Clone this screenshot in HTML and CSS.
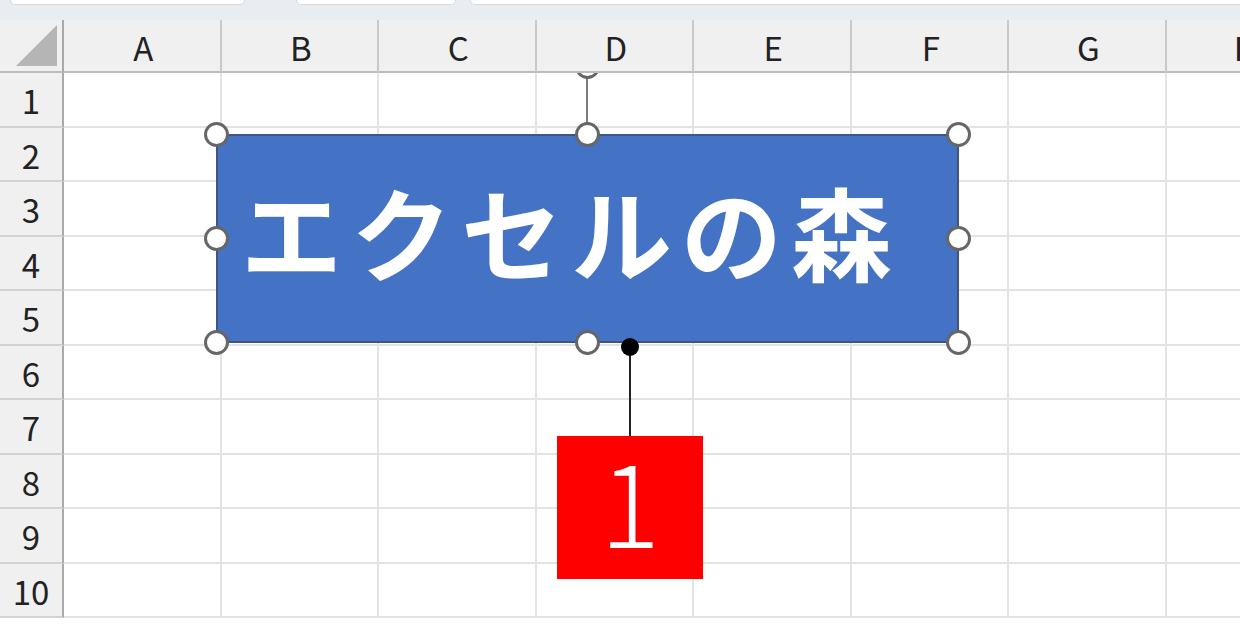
FILE: index.html
```html
<!DOCTYPE html>
<html lang="ja">
<head>
    <meta charset="UTF-8">
    <meta name="viewport" content="width=device-width, initial-scale=1.0">
    <title>エクセルの森</title>
    <link rel="stylesheet" href="styles.css">
</head>
<body>

<div class="page">
    <div class="topbar">
        <div class="tab tab-1"></div>
        <div class="tab tab-2"></div>
        <div class="tab tab-3"></div>
    </div>

    <div class="sheet">
        <div class="corner"><span class="select-all"></span></div>
        <div class="col-head">A</div><div class="col-head">B</div><div class="col-head">C</div><div class="col-head">D</div>
        <div class="col-head">E</div><div class="col-head">F</div><div class="col-head">G</div><div class="col-head">H</div>

        <div class="row-head">1</div><div class="cell"></div><div class="cell"></div><div class="cell"></div><div class="cell"></div><div class="cell"></div><div class="cell"></div><div class="cell"></div><div class="cell"></div>
        <div class="row-head">2</div><div class="cell"></div><div class="cell"></div><div class="cell"></div><div class="cell"></div><div class="cell"></div><div class="cell"></div><div class="cell"></div><div class="cell"></div>
        <div class="row-head">3</div><div class="cell"></div><div class="cell"></div><div class="cell"></div><div class="cell"></div><div class="cell"></div><div class="cell"></div><div class="cell"></div><div class="cell"></div>
        <div class="row-head">4</div><div class="cell"></div><div class="cell"></div><div class="cell"></div><div class="cell"></div><div class="cell"></div><div class="cell"></div><div class="cell"></div><div class="cell"></div>
        <div class="row-head">5</div><div class="cell"></div><div class="cell"></div><div class="cell"></div><div class="cell"></div><div class="cell"></div><div class="cell"></div><div class="cell"></div><div class="cell"></div>
        <div class="row-head">6</div><div class="cell"></div><div class="cell"></div><div class="cell"></div><div class="cell"></div><div class="cell"></div><div class="cell"></div><div class="cell"></div><div class="cell"></div>
        <div class="row-head">7</div><div class="cell"></div><div class="cell"></div><div class="cell"></div><div class="cell"></div><div class="cell"></div><div class="cell"></div><div class="cell"></div><div class="cell"></div>
        <div class="row-head">8</div><div class="cell"></div><div class="cell"></div><div class="cell"></div><div class="cell"></div><div class="cell"></div><div class="cell"></div><div class="cell"></div><div class="cell"></div>
        <div class="row-head">9</div><div class="cell"></div><div class="cell"></div><div class="cell"></div><div class="cell"></div><div class="cell"></div><div class="cell"></div><div class="cell"></div><div class="cell"></div>
        <div class="row-head">10</div><div class="cell"></div><div class="cell"></div><div class="cell"></div><div class="cell"></div><div class="cell"></div><div class="cell"></div><div class="cell"></div><div class="cell"></div>
    </div>

    <!-- drawing layer: selected shape and its callout -->
    <div class="rotate-line"></div>
    <div class="handle rotate"></div>

    <div class="shape">
        <span class="shape-text">エクセルの森</span>
    </div>

    <div class="handle h-tl"></div>
    <div class="handle h-tc"></div>
    <div class="handle h-tr"></div>
    <div class="handle h-ml"></div>
    <div class="handle h-mr"></div>
    <div class="handle h-bl"></div>
    <div class="handle h-bc"></div>
    <div class="handle h-br"></div>

    <div class="pin-dot"></div>
    <div class="pin-line"></div>
    <div class="badge">1</div>
</div>

</body>
</html>
```

FILE: styles.css
```css
/* Basic styling */
body {
    margin: 0;
    background: #fff;
    overflow: hidden;
    font-family: "Noto Sans CJK JP", "Noto Sans", sans-serif;
}
.page {
    position: relative;
    width: 1240px;
    height: 639px;
    overflow: hidden;
}

/* sheet tabs strip */
.topbar {
    display: flex;
    height: 20px;
    background: #e9edf1;
    padding-left: 10px;
    box-sizing: border-box;
}
.tab {
    height: 5px;
    background: #fff;
    border: 1px solid #d6dade;
    border-top: none;
    border-radius: 0 0 8px 8px;
    box-sizing: border-box;
}
.tab-1 { width: 235px; }
.tab-2 { width: 160px; margin-left: 51px; }
.tab-3 { flex: 1; margin-left: 14px; margin-right: -10px; }

/* grid */
.sheet {
    display: grid;
    grid-template-columns: 64px repeat(8, 157.5px);
    grid-template-rows: 53px repeat(10, 54.5px);
    width: max-content;
    color: #222;
}
.corner,
.col-head,
.row-head {
    position: relative;
    z-index: 3;
    background: #f0f0f0;
    box-sizing: border-box;
    display: flex;
    align-items: center;
    justify-content: center;
    font-size: 33px;
}
.corner {
    border-right: 2px solid #a9a9a9;
    border-bottom: 2px solid #bcbcbc;
    align-items: flex-end;
    justify-content: flex-end;
    padding: 0 5px 5px 0;
}
.select-all {
    width: 0;
    height: 0;
    border-left: 41px solid transparent;
    border-bottom: 41px solid #b5b5b5;
}
.col-head {
    border-right: 2px solid #c9c9c9;
    border-bottom: 2px solid #bcbcbc;
    padding: 2px 0 0 3px;
}
.row-head {
    border-right: 2px solid #a9a9a9;
    border-bottom: 2px solid #d2d2d2;
    padding-top: 2px;
}
.cell {
    border-right: 2px solid #e3e3e3;
    border-bottom: 2px solid #e3e3e3;
    box-sizing: border-box;
}

/* shape */
.shape {
    position: absolute;
    left: 216px;
    top: 134px;
    width: 743px;
    height: 209px;
    z-index: 1;
    background: #4472c4;
    border: 2px solid #3e5680;
    box-sizing: border-box;
    display: flex;
    align-items: center;
    padding: 0 0 16px 23px;
}
.shape-text {
    color: #fff;
    font-family: "Noto Sans CJK JP", sans-serif;
    font-weight: 700;
    font-size: 101px;
    letter-spacing: 9px;
    line-height: 1;
    white-space: nowrap;
}

.rotate-line {
    position: absolute;
    left: 586px;
    top: 70px;
    width: 2px;
    height: 56px;
    background: #7a7a7a;
    z-index: 1;
}
.handle {
    position: absolute;
    width: 25px;
    height: 25px;
    margin: -12.5px 0 0 -12.5px;
    border: 3.5px solid #666;
    border-radius: 50%;
    background: #fff;
    box-sizing: border-box;
    z-index: 2;
}
.rotate { left: 587px; top: 66px; }
.h-tl { left: 216px; top: 134px; }
.h-tc { left: 587px; top: 134px; }
.h-tr { left: 958px; top: 134px; }
.h-ml { left: 216px; top: 238px; }
.h-mr { left: 958px; top: 238px; }
.h-bl { left: 216px; top: 342px; }
.h-bc { left: 587px; top: 342px; }
.h-br { left: 958px; top: 342px; }

/* callout number */
.pin-dot {
    position: absolute;
    left: 621px;
    top: 338px;
    width: 18px;
    height: 18px;
    border-radius: 50%;
    background: #000;
    z-index: 2;
}
.pin-line {
    position: absolute;
    left: 629px;
    top: 347px;
    width: 1.5px;
    height: 90px;
    background: #222;
    z-index: 1;
}
.badge {
    position: absolute;
    left: 557px;
    top: 436px;
    width: 146px;
    height: 143px;
    z-index: 1;
    background: #ff0000;
    color: #fff;
    display: flex;
    align-items: center;
    justify-content: center;
    font-family: "Noto Sans CJK JP", sans-serif;
    font-weight: 300;
    font-size: 112px;
    line-height: 1;
    padding-bottom: 18px;
    box-sizing: border-box;
}
```
